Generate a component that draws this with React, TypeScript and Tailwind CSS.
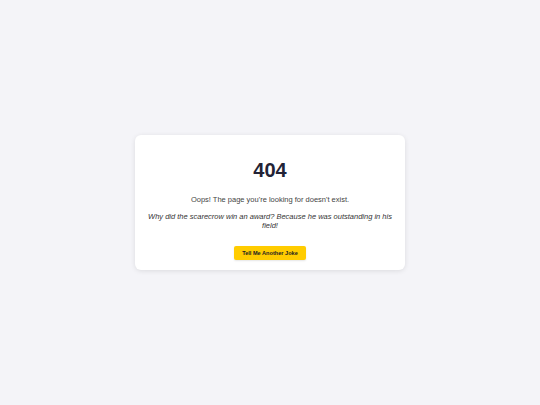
import { useState } from 'react';

const JOKES = [
  'Why did the scarecrow win an award? Because he was outstanding in his field!',
  "Why don't skeletons fight each other? They don't have the guts.",
  'What do you call fake spaghetti? An impasta!',
];

const App = () => {
  const [index, setIndex] = useState(0);

  const nextJoke = () => setIndex((i) => (i + 1) % JOKES.length);

  return (
    <div
      className="min-h-screen w-full flex items-center justify-center bg-[#f4f4f8]"
      style={{ fontFamily: '"Liberation Sans", Arial, sans-serif' }}
    >
      <div className="w-[270px] bg-white rounded-[6px] shadow-[0_1px_5px_rgba(0,0,0,0.1)] px-[11px] pt-[25px] pb-[8px] text-center">
        <h1 className="text-[20px] leading-[20px] font-bold text-[#232336]">404</h1>
        <p className="mt-[15px] text-[7.5px] leading-[9.4px] text-[#444]">
          Oops! The page you're looking for doesn't exist.
        </p>
        <p className="mt-[7.5px] text-[7.5px] leading-[9.4px] italic text-[#333]">{JOKES[index]}</p>
        <button
          onClick={nextJoke}
          className="mt-[16px] h-[14px] px-[8.5px] rounded-[2px] bg-[#ffcc00] text-[5.6px] font-bold text-[#222] shadow-[0_1px_2px_rgba(0,0,0,0.1)] cursor-pointer"
        >
          Tell Me Another Joke
        </button>
      </div>
    </div>
  );
};

export default App;
